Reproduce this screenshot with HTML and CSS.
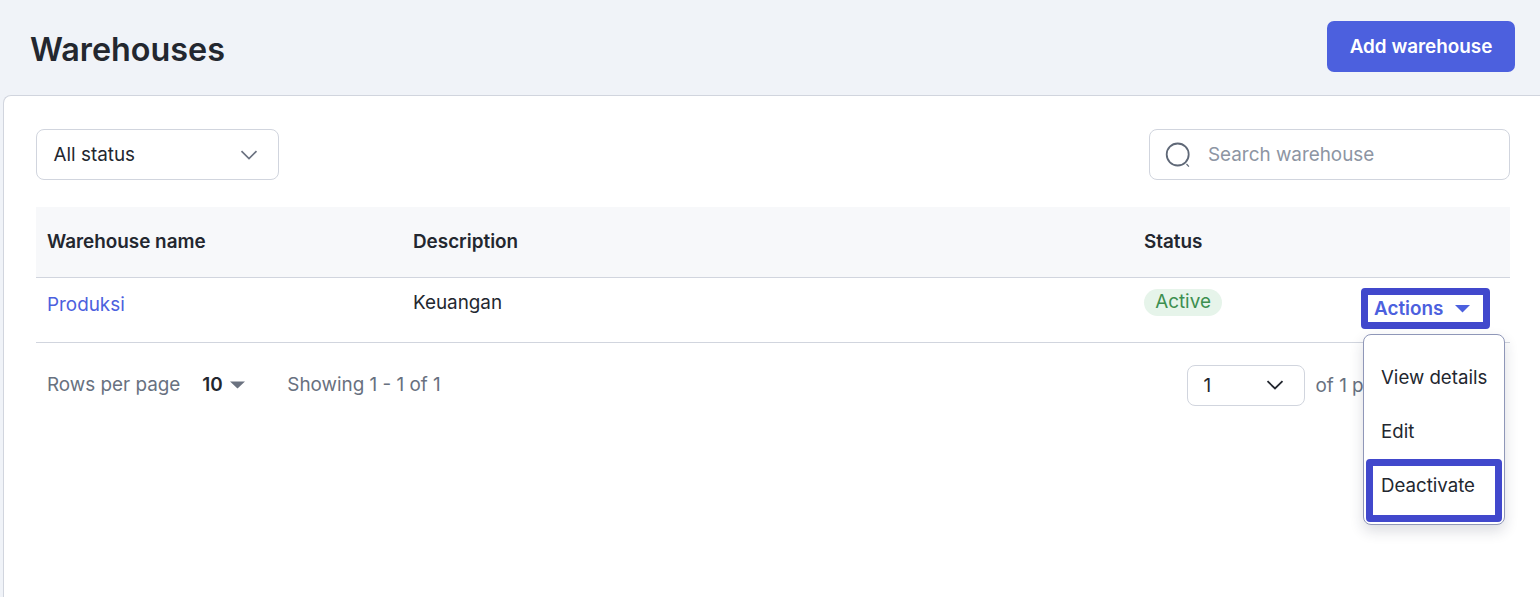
FILE: index.html
```html
<!DOCTYPE html>
<html lang="en">
<head>
<meta charset="utf-8">
<title>Warehouses</title>
<link rel="stylesheet" href="styles.css">
</head>
<body>
<header class="page-head">
  <h1 class="title">Warehouses</h1>
  <button class="btn-primary">Add warehouse</button>
</header>
<main class="card">
  <div class="filters">
    <div class="select status-select">
      <span>All status</span>
      <svg class="chev" width="18" height="10" viewBox="0 0 18 10"><path d="M1.5 1.2 9 8.5l7.5-7.3" fill="none" stroke="#6b7280" stroke-width="1.7"/></svg>
    </div>
    <div class="search">
      <svg width="28" height="28" viewBox="0 0 28 28"><circle cx="13.7" cy="13.5" r="11" fill="none" stroke="#5f6877" stroke-width="1.8"/><path d="m22.5 23 2.4 2.6" fill="none" stroke="#5f6877" stroke-width="1.2"/></svg>
      <span class="placeholder">Search warehouse</span>
    </div>
  </div>
  <div class="table">
    <div class="row head">
      <div class="cell">Warehouse name</div>
      <div class="cell">Description</div>
      <div class="cell">Status</div>
    </div>
    <div class="row body-row">
      <div class="cell name"><a class="link" href="#">Produksi</a></div>
      <div class="cell desc">Keuangan</div>
      <div class="cell status">
        <span class="badge">Active</span>
        <div class="actions-wrap">
          <button class="actions">Actions<svg width="15" height="8" viewBox="0 0 15 8"><path d="M0 0h15L7.5 7.5z" fill="#4c60de"/></svg></button>
          <div class="menu">
            <div class="menu-item">View details</div>
            <div class="menu-item">Edit</div>
            <div class="menu-item danger">Deactivate</div>
          </div>
        </div>
      </div>
    </div>
  </div>
  <footer class="pager">
    <span class="muted">Rows per page</span>
    <span class="rows">10</span>
    <svg class="rows-caret" width="15" height="8" viewBox="0 0 15 8"><path d="M0 .5h15L7.5 7.5z" fill="#6b7280"/></svg>
    <span class="muted showing">Showing 1 - 1 of 1</span>
    <div class="pages">
      <div class="select page-select">
        <span>1</span>
        <svg width="18" height="10" viewBox="0 0 18 10"><path d="M1.5 1.2 9 8.5l7.5-7.3" fill="none" stroke="#23272f" stroke-width="1.8"/></svg>
      </div>
      <span class="muted">of 1 page</span>
    </div>
  </footer>
</main>
</body>
</html>
```
FILE: styles.css
```css
* { box-sizing: border-box; }
html, body { margin: 0; height: 100%; }
body {
  height: 597px;
  overflow: hidden;
  background: #f0f3f8;
  font-family: Inter, "Liberation Sans", sans-serif;
  font-size: 18.86px;
  color: #23272f;
  display: flex;
  flex-direction: column;
}
.page-head {
  height: 95px;
  flex: none;
  display: flex;
  justify-content: space-between;
  align-items: flex-start;
  padding: 21px 25px 0 30px;
}
.title {
  margin: 8px 0 0;
  font-size: 32.33px;
  line-height: 42px;
  font-weight: 600;
  color: #23272f;
}
.btn-primary {
  width: 188px;
  height: 51px;
  border: 0;
  border-radius: 7px;
  background: #4c60de;
  color: #fff;
  font: 600 18.86px Inter, sans-serif;
}
.card {
  flex: 1;
  margin-left: 3px;
  background: #fff;
  border: 1px solid #d1d5de;
  border-right: 0;
  border-bottom: 0;
  border-top-left-radius: 8px;
  padding: 33px 30px 0 32px;
}
.filters {
  display: flex;
  justify-content: space-between;
  margin-bottom: 27px;
}
.select {
  display: flex;
  align-items: center;
  justify-content: space-between;
  background: #fff;
  border: 1px solid #d1d5de;
  border-radius: 8px;
}
.status-select {
  width: 243px;
  height: 51px;
  padding: 0 20px 0 16.5px;
}
.search {
  width: 361px;
  height: 51px;
  display: flex;
  align-items: center;
  gap: 16px;
  padding-left: 14px;
  border: 1px solid #d1d5de;
  border-radius: 8px;
}
.placeholder { color: #8d95a3; }
.row {
  display: grid;
  grid-template-columns: 366px 731px 377px;
  border-bottom: 1px solid #d1d5de;
}
.cell { padding-left: 11px; }
.head {
  height: 71px;
  align-items: center;
  background: #f7f8fa;
  font-weight: 600;
}
.head .cell { line-height: 68px; }
.body-row { height: 65px; }
.name { padding-top: 16px; line-height: 22px; }
.link { color: #4c60de; text-decoration: none; }
.desc { padding-top: 14px; line-height: 22px; }
.status {
  display: flex;
  justify-content: space-between;
  align-items: flex-start;
  padding-right: 20px;
  padding-top: 11px;
}
.badge {
  height: 27px;
  width: 78px;
  border-radius: 14px;
  background: #e6f4ea;
  color: #3d8f50;
  line-height: 25px;
  text-align: center;
}
.actions-wrap { position: relative; margin-top: -1px; }
.actions {
  width: 129px;
  height: 41px;
  display: flex;
  align-items: center;
  gap: 12px;
  padding: 0 0 0 6px;
  background: #fff;
  border: 7px solid #4148cc;
  border-radius: 4px;
  color: #4c60de;
  font: 600 18.86px Inter, sans-serif;
}
.menu {
  position: absolute;
  top: 46px;
  left: 2px;
  width: 142px;
  height: 191px;
  padding: 16px 2px 2px;
  background: #fff;
  border: 1px solid #8f97b8;
  border-radius: 8px;
  font-size: 18.67px;
  box-shadow: 0 6px 14px rgba(30, 40, 70, .16);
}
.menu-item {
  height: 54px;
  padding: 0 0 0 15px;
  line-height: 54px;
  white-space: nowrap;
}
.menu-item.danger {
  height: 63px;
  padding-left: 8px;
  line-height: 39px;
  border: 7px solid #4148cc;
  border-radius: 4px;
}
.pager {
  display: flex;
  align-items: center;
  height: 83px;
  padding: 0 0 0 11px;
}
.muted { color: #687180; }
.rows { margin-left: 22px; font-weight: 600; }
.rows-caret { margin-left: 7px; }
.showing { margin-left: 42.5px; }
.pages {
  display: flex;
  align-items: center;
  gap: 11px;
  margin-left: auto;
  margin-right: 113px;
  padding-top: 1px;
}
.page-select {
  width: 118px;
  height: 41px;
  padding: 0 20px 0 16px;
}
```
